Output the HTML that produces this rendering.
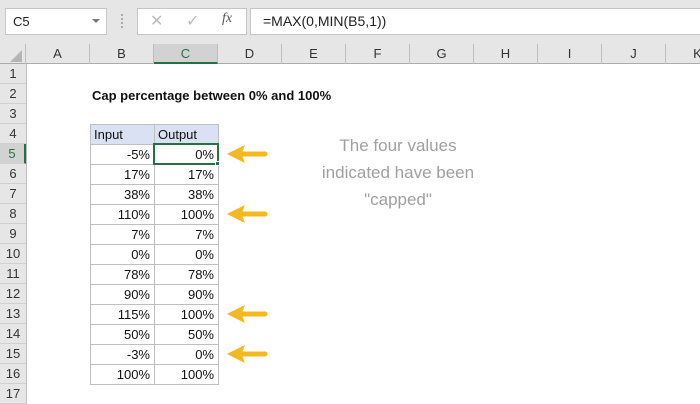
<!DOCTYPE html>
<html><head><style>
*{margin:0;padding:0;box-sizing:border-box}
body{width:700px;height:400px;background:#fff;font-family:"Liberation Sans",sans-serif;position:relative;overflow:hidden}
.a{position:absolute}
.ch{position:absolute;top:44px;height:20px;font-size:13px;color:#333;text-align:center;line-height:20px;border-right:1px solid #bdbdbd}
.rh{position:absolute;left:0;width:26px;height:20px;font-size:13px;color:#333;text-align:center;line-height:20px;background:#e6e6e6;border-bottom:1px solid #d0d0d0}
.c{position:absolute;height:21px;width:65px;font-size:13px;line-height:20px;text-align:right;padding-right:4px;color:#111;border:1px solid #bfbfbf;margin:-1px 0 0 -1px}
.note{position:absolute;left:290px;width:216px;text-align:center;font-size:17px;color:#a0a0a0}
</style></head><body>
<div class="a" style="left:0;top:0;width:700px;height:44px;background:#e6e6e6"></div>
<div class="a" style="left:5px;top:8px;width:102px;height:27px;background:#fff;border:1px solid #c6c6c6;font-size:13px;line-height:25px;padding-left:7px;color:#222">C5</div>
<div class="a" style="left:92px;top:19px;width:0;height:0;border-left:4px solid transparent;border-right:4px solid transparent;border-top:4px solid #777"></div>
<div class="a" style="left:121px;top:14px;width:2px;height:14px;border-left:2px dotted #aaa"></div>
<div class="a" style="left:137px;top:8px;width:110px;height:27px;background:#fff;border:1px solid #c6c6c6"></div>
<div class="a" style="left:150px;top:11px;font-size:16px;color:#bbb">✕</div>
<div class="a" style="left:186px;top:11px;font-size:16px;color:#bbb">✓</div>
<div class="a" style="left:222px;top:11px;font-size:14px;color:#555;font-style:italic;font-family:'Liberation Serif',serif">fx</div>
<div class="a" style="left:250px;top:8px;width:460px;height:27px;background:#fff;border:1px solid #c6c6c6;font-size:14px;line-height:25px;padding-left:12px;color:#222">=MAX(0,MIN(B5,1))</div>
<div class="a" style="left:0;top:44px;width:700px;height:20px;background:#e6e6e6;border-bottom:1px solid #ababab"></div>
<div class="a" style="left:0;top:44px;width:26px;height:20px;border-right:1px solid #bdbdbd"></div>
<div class="a" style="left:10px;top:50px;width:0;height:0;border-left:12px solid transparent;border-bottom:12px solid #b5b5b5"></div>
<div class="ch" style="left:26px;width:64px">A</div>
<div class="ch" style="left:90px;width:64px">B</div>
<div class="ch" style="left:154px;width:64px;background:#d2d2d2;color:#217346;border-bottom:2px solid #217346">C</div>
<div class="ch" style="left:218px;width:64px">D</div>
<div class="ch" style="left:282px;width:64px">E</div>
<div class="ch" style="left:346px;width:64px">F</div>
<div class="ch" style="left:410px;width:64px">G</div>
<div class="ch" style="left:474px;width:64px">H</div>
<div class="ch" style="left:538px;width:64px">I</div>
<div class="ch" style="left:602px;width:64px">J</div>
<div class="ch" style="left:666px;width:64px">K</div>
<div class="a" style="left:26px;top:64px;width:1px;height:340px;background:#bdbdbd"></div>
<div class="rh" style="top:64px">1</div><div class="rh" style="top:84px">2</div><div class="rh" style="top:104px">3</div><div class="rh" style="top:124px">4</div>
<div class="rh" style="top:144px;background:#d2d2d2;color:#217346;border-right:2px solid #217346">5</div>
<div class="rh" style="top:164px">6</div><div class="rh" style="top:184px">7</div><div class="rh" style="top:204px">8</div><div class="rh" style="top:224px">9</div><div class="rh" style="top:244px">10</div><div class="rh" style="top:264px">11</div><div class="rh" style="top:284px">12</div><div class="rh" style="top:304px">13</div><div class="rh" style="top:324px">14</div><div class="rh" style="top:344px">15</div><div class="rh" style="top:364px">16</div><div class="rh" style="top:384px">17</div>
<div class="a" style="left:92px;top:88px;font-size:13px;font-weight:bold;color:#111">Cap percentage between 0% and 100%</div>
<div class="c" style="left:91px;top:125px;background:#d9e1f2;text-align:left;padding-left:3px">Input</div>
<div class="c" style="left:155px;top:125px;background:#d9e1f2;text-align:left;padding-left:3px">Output</div>
<div class="c" style="left:91px;top:145px">-5%</div><div class="c" style="left:155px;top:145px">0%</div>
<div class="c" style="left:91px;top:165px">17%</div><div class="c" style="left:155px;top:165px">17%</div>
<div class="c" style="left:91px;top:185px">38%</div><div class="c" style="left:155px;top:185px">38%</div>
<div class="c" style="left:91px;top:205px">110%</div><div class="c" style="left:155px;top:205px">100%</div>
<div class="c" style="left:91px;top:225px">7%</div><div class="c" style="left:155px;top:225px">7%</div>
<div class="c" style="left:91px;top:245px">0%</div><div class="c" style="left:155px;top:245px">0%</div>
<div class="c" style="left:91px;top:265px">78%</div><div class="c" style="left:155px;top:265px">78%</div>
<div class="c" style="left:91px;top:285px">90%</div><div class="c" style="left:155px;top:285px">90%</div>
<div class="c" style="left:91px;top:305px">115%</div><div class="c" style="left:155px;top:305px">100%</div>
<div class="c" style="left:91px;top:325px">50%</div><div class="c" style="left:155px;top:325px">50%</div>
<div class="c" style="left:91px;top:345px">-3%</div><div class="c" style="left:155px;top:345px">0%</div>
<div class="c" style="left:91px;top:365px">100%</div><div class="c" style="left:155px;top:365px">100%</div>
<div class="a" style="left:153px;top:143px;width:66px;height:22px;border:2px solid #217346"></div>
<div class="a" style="left:215px;top:161px;width:5px;height:5px;background:#217346;border:1px solid #fff"></div>
<svg class="a" style="left:0;top:0" width="700" height="400">
<g fill="#f4b922" stroke="#f4b922" stroke-linecap="round">
<g transform="translate(0,154)"><path d="M228 0 L244 -8 L241 0 L244 8 Z"/><line x1="240" y1="0" x2="265" y2="0" stroke-width="5"/></g>
<g transform="translate(0,214)"><path d="M228 0 L244 -8 L241 0 L244 8 Z"/><line x1="240" y1="0" x2="265" y2="0" stroke-width="5"/></g>
<g transform="translate(0,314)"><path d="M228 0 L244 -8 L241 0 L244 8 Z"/><line x1="240" y1="0" x2="265" y2="0" stroke-width="5"/></g>
<g transform="translate(0,354)"><path d="M228 0 L244 -8 L241 0 L244 8 Z"/><line x1="240" y1="0" x2="265" y2="0" stroke-width="5"/></g>
</g></svg>
<div class="note" style="top:136px">The four values</div>
<div class="note" style="top:163px">indicated have been</div>
<div class="note" style="top:190px">"capped"</div>
</body></html>
